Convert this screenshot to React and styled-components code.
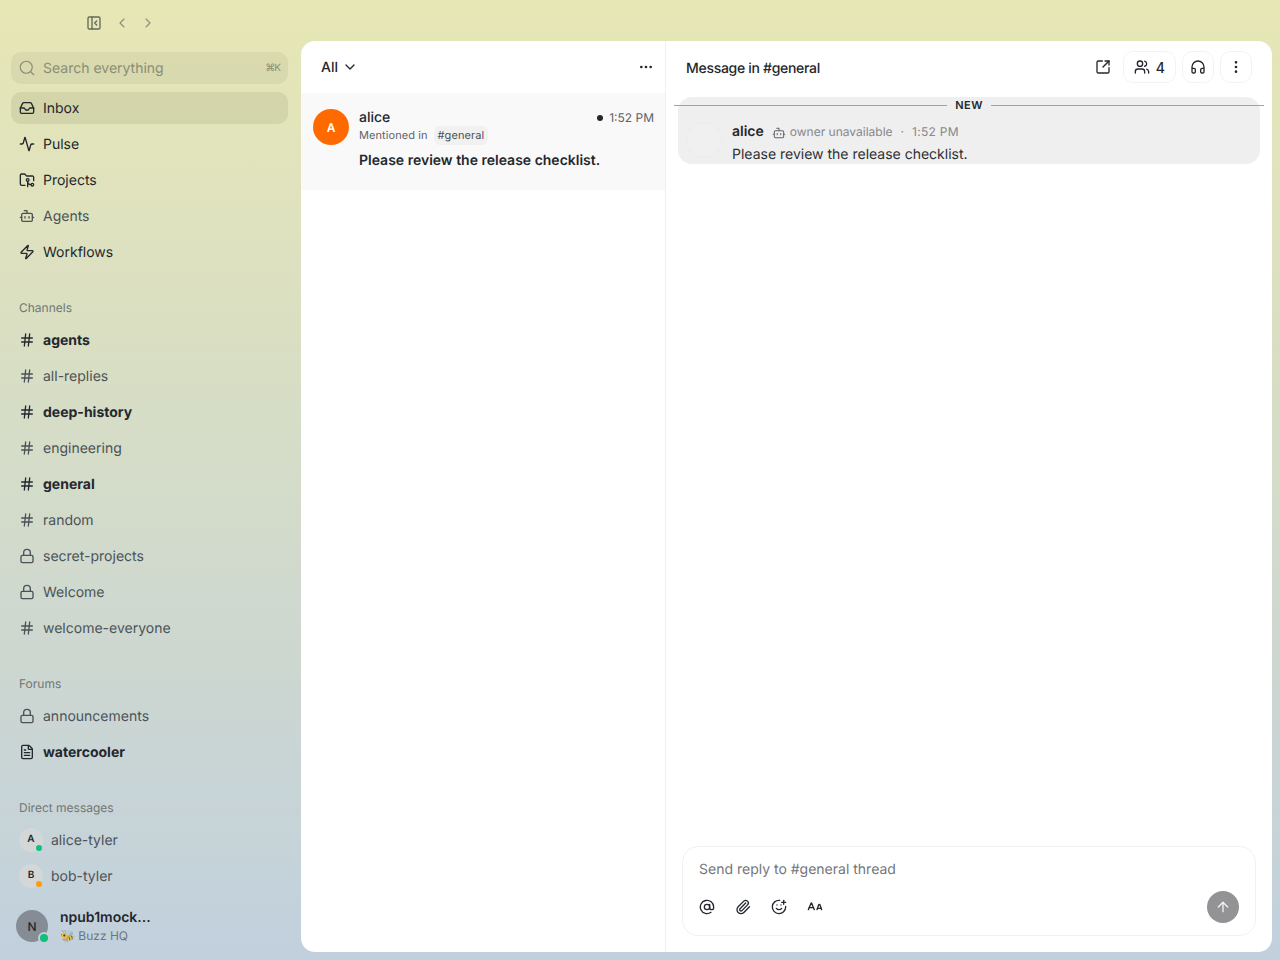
import {
  Activity, ALargeSmall, ArrowUp, AtSign, Bot, ChevronDown, ChevronLeft, ChevronRight,
  Ellipsis, EllipsisVertical, FileText, FolderGit2, Hash, Headphones, Inbox, Lock,
  Paperclip, PanelLeftClose, Search, SmilePlus, SquareArrowOutUpRight, Users, Zap,
} from 'lucide-react'
import styled, { createGlobalStyle } from 'styled-components'

const Global = createGlobalStyle`
  html, body { margin: 0; padding: 0; height: 100%; }
  body {
    font-family: Inter, "Noto Sans", sans-serif;
    color: #24272d;
    overflow: hidden;
    text-rendering: geometricPrecision;
  }
  * { box-sizing: border-box; }
`

const Page = styled.div`
  width: 1280px;
  height: 960px;
  display: flex;
  background: linear-gradient(180deg, #e7e7b5 0%, #c1d0dd 100%);
`

const Sidebar = styled.aside`
  width: 301px;
  flex: none;
  display: flex;
  flex-direction: column;
  padding: 0 13px 0 11px;
`

const TopBar = styled.div`
  height: 46px;
  flex: none;
  display: flex;
  align-items: center;
  gap: 10px;
  padding-left: 75px;
  color: #8d907b;
`

const SidebarToggle = styled(PanelLeftClose)`
  color: #66695a;
  margin-right: 2px;
`

const Label = styled.span`
  padding-top: 1px;
  line-height: 16px;
`

const SearchBox = styled.div`
  height: 32px;
  margin-top: 6px;
  flex: none;
  display: flex;
  align-items: center;
  gap: 7px;
  padding: 0 8px 0 7px;
  border-radius: 10px;
  background: rgba(120, 120, 90, 0.1);
  color: #8a8d76;
  font-size: 14px;
`

const Kbd = styled.span`
  margin-left: auto;
  font-size: 10px;
  letter-spacing: -1px;
`

const Nav = styled.nav`
  display: flex;
  flex-direction: column;
  gap: 4px;
  margin-top: 8px;
`

const Row = styled.div`
  height: 32px;
  display: flex;
  align-items: center;
  gap: 8px;
  padding-left: 8px;
  border-radius: 10px;
  font-size: 14px;
  font-weight: ${p => (p.$bold ? 700 : 400)};
  color: ${p => (p.$bold || p.$nav ? '#24272d' : '#4b5258')};
  background: ${p => (p.$active ? 'rgba(110, 110, 70, 0.13)' : 'transparent')};
  svg { flex: none; color: ${p => (p.$bold || p.$nav ? '#24272d' : '#4b5258')}; }
`

const SectionLabel = styled.div`
  height: 32px;
  margin-top: 20px;
  margin-bottom: -4px;
  padding-left: 8px;
  display: flex;
  align-items: center;
  font-size: 12px;
  line-height: 16px;
  color: #6f7674;
`

const DmAvatar = styled.span`
  position: relative;
  width: 24px;
  height: 24px;
  border-radius: 50%;
  background: #d4d7d8;
  display: flex;
  align-items: center;
  justify-content: center;
  font-size: 10px;
  font-weight: 600;
  color: #24272d;
  padding-bottom: 2px;
`

const StatusDot = styled.span`
  position: absolute;
  right: ${p => p.$offset}px;
  bottom: ${p => p.$offset}px;
  width: ${p => p.$size}px;
  height: ${p => p.$size}px;
  border-radius: 50%;
  background: ${p => p.$color};
  box-shadow: ${p => (p.$ring ? '0 0 0 2px #c3d0da' : 'none')};
`

const Footer = styled.div`
  display: flex;
  align-items: center;
  gap: 12px;
  margin-top: 16px;
  padding-left: 5px;
`

const UserAvatar = styled.span`
  position: relative;
  width: 32px;
  height: 32px;
  border-radius: 50%;
  background: #858c95;
  display: flex;
  align-items: center;
  justify-content: center;
  font-size: 12px;
  font-weight: 500;
  color: #24272d;
`

const UserText = styled.div`
  display: flex;
  flex-direction: column;
  gap: 1px;
`

const UserName = styled.span`
  padding-top: 1px;
  font-size: 14px;
  font-weight: 600;
  line-height: 18px;
`

const UserOrg = styled.span`
  font-size: 12px;
  line-height: 16px;
  color: #6d7580;
`

const Bee = styled.span`
  opacity: 0.7;
`

const Panel = styled.main`
  width: 971px;
  height: 911px;
  margin-top: 41px;
  display: flex;
  overflow: hidden;
  border-radius: 14px;
  background: #fff;
`

const ListColumn = styled.section`
  width: 365px;
  flex: none;
  border-right: 1px solid #f0f0f0;
`

const ListHeader = styled.header`
  height: 52px;
  display: flex;
  align-items: center;
  justify-content: space-between;
  padding: 0 11px 0 20px;
`

const Filter = styled.div`
  display: flex;
  align-items: center;
  gap: 4px;
  font-size: 14px;
  font-weight: 500;
`

const InboxItem = styled.article`
  height: 97px;
  display: flex;
  gap: 10px;
  padding: 16px 11px 0 12px;
  background: #f9f9f9;
`

const ItemAvatar = styled.span`
  width: 36px;
  height: 36px;
  flex: none;
  border-radius: 50%;
  background: #ff6a00;
  color: #fff;
  font-size: 12px;
  font-weight: 600;
  display: flex;
  align-items: center;
  justify-content: center;
`

const ItemBody = styled.div`
  flex: 1;
  min-width: 0;
`

const ItemTop = styled.div`
  display: flex;
  align-items: center;
  justify-content: space-between;
  height: 17px;
  padding-top: 1px;
  margin-bottom: -1px;
  line-height: 16px;
`

const ItemName = styled.span`
  font-size: 14px;
  font-weight: 500;
`

const ItemTime = styled.span`
  display: flex;
  align-items: center;
  gap: 6px;
  font-size: 12px;
  color: #5f6368;
`

const UnreadDot = styled.span`
  width: 6px;
  height: 6px;
  border-radius: 50%;
  background: #24272d;
`

const ItemMeta = styled.div`
  display: flex;
  align-items: center;
  gap: 6px;
  height: 20px;
  font-size: 11px;
  line-height: 14px;
  letter-spacing: 0.08px;
  color: #5f6368;
`

const ChannelPill = styled.span`
  padding: 2px 4px 3px;
  border-radius: 6px;
  background: #f1f1f1;
  color: #4b5258;
`

const ItemText = styled.p`
  margin: 6px 0 0;
  font-size: 14px;
  line-height: 20px;
  font-weight: 600;
`

const ThreadColumn = styled.section`
  flex: 1;
  min-width: 0;
  display: flex;
  flex-direction: column;
`

const ThreadHeader = styled.header`
  height: 52px;
  margin-bottom: 4px;
  flex: none;
  display: flex;
  align-items: center;
  padding: 0 20px;
  gap: 6px;
`

const ThreadTitle = styled.h1`
  margin: 4px auto 0 0;
  font-size: 14px;
  line-height: 16px;
  font-weight: 500;
  letter-spacing: -0.3px;
`

const IconButton = styled.button`
  height: 32px;
  min-width: 32px;
  padding: ${p => (p.$wide ? '0 10px' : '0')};
  margin-right: ${p => (p.$plain ? '-2px' : '0')};
  display: flex;
  align-items: center;
  justify-content: center;
  gap: 6px;
  border: 1px solid ${p => (p.$plain ? 'transparent' : '#f3f3f3')};
  border-radius: 10px;
  background: transparent;
  color: #24272d;
  font: 500 14px Inter, sans-serif;
`

const ThreadBody = styled.div`
  position: relative;
  flex: 1;
  padding: 0 12px;
`

const Highlight = styled.div`
  height: 67px;
  overflow: hidden;
  display: flex;
  gap: 10px;
  padding: 24px 8px 0 8px;
  border-radius: 14px;
  background: #efefef;
`

const Divider = styled.div`
  position: absolute;
  top: 0;
  left: 8px;
  right: 8px;
  display: flex;
  align-items: center;
  gap: 8px;
  height: 16px;
  font-size: 11px;
  font-weight: 600;
  letter-spacing: 0.5px;
  &::before, &::after {
    content: '';
    flex: 1;
    height: 1px;
    background: #a3a3a3;
  }
`

const GhostAvatar = styled.span`
  width: 36px;
  height: 36px;
  margin-top: 1px;
  flex: none;
  border-radius: 50%;
  border: 1px solid #ebebeb;
  background: #f0f0f0;
`

const MessageMeta = styled.div`
  height: 21px;
  padding-top: 1px;
  display: flex;
  align-items: center;
  font-size: 12px;
  line-height: 16px;
  color: #85888c;
`

const MessageAuthor = styled.span`
  font-size: 14px;
  font-weight: 600;
  color: #24272d;
  margin-right: 8px;
`

const OwnerNote = styled.span`
  display: flex;
  align-items: center;
  gap: 4px;
  svg { color: #5f6368; margin-top: 2px; }
`

const Separator = styled.span`
  margin: 0 8px;
`

const MessageTime = styled.span`
  letter-spacing: 0.3px;
`

const MessageText = styled.p`
  margin: 3px 0 0;
  font-size: 14px;
  line-height: 20px;
  color: #2c2f35;
`

const Composer = styled.div`
  height: 90px;
  flex: none;
  margin: 0 16px 16px;
  padding: 14px 16px 0;
  border: 1px solid #f1f1f1;
  border-radius: 16px;
`

const Placeholder = styled.div`
  font-size: 14px;
  line-height: 18px;
  color: #73767a;
`

const Tools = styled.div`
  display: flex;
  align-items: center;
  gap: 20px;
  margin-top: 12px;
  color: #24272d;
`

const SendButton = styled.span`
  width: 32px;
  height: 32px;
  margin-left: auto;
  border-radius: 50%;
  background: #939396;
  color: #f2f2f2;
  display: flex;
  align-items: center;
  justify-content: center;
`

const primary = [
  { label: 'Inbox', Icon: Inbox, active: true },
  { label: 'Pulse', Icon: Activity },
  { label: 'Projects', Icon: FolderGit2 },
  { label: 'Agents', Icon: Bot, muted: true },
  { label: 'Workflows', Icon: Zap },
]

const channels = [
  { label: 'agents', Icon: Hash, bold: true },
  { label: 'all-replies', Icon: Hash },
  { label: 'deep-history', Icon: Hash, bold: true },
  { label: 'engineering', Icon: Hash },
  { label: 'general', Icon: Hash, bold: true },
  { label: 'random', Icon: Hash },
  { label: 'secret-projects', Icon: Lock },
  { label: 'Welcome', Icon: Lock },
  { label: 'welcome-everyone', Icon: Hash },
]

const forums = [
  { label: 'announcements', Icon: Lock },
  { label: 'watercooler', Icon: FileText, bold: true },
]

const dms = [
  { label: 'alice-tyler', letter: 'A', color: '#0fbf7c' },
  { label: 'bob-tyler', letter: 'B', color: '#ff9d0a' },
]

const SideRow = ({ item }) => (
  <Row $bold={item.bold} $active={item.active} $nav={item.nav}>
    <item.Icon size={16} strokeWidth={2} />
    <Label>{item.label}</Label>
  </Row>
)

export default function App() {
  return (
    <Page>
      <Global />
      <Sidebar>
        <TopBar>
          <SidebarToggle size={16} strokeWidth={2} />
          <ChevronLeft size={16} strokeWidth={1.75} />
          <ChevronRight size={16} strokeWidth={1.75} />
        </TopBar>
        <SearchBox>
          <Search size={18} strokeWidth={1.5} />
          <Label>Search everything</Label>
          <Kbd>⌘K</Kbd>
        </SearchBox>
        <Nav>
          {primary.map(item => (
            <SideRow key={item.label} item={{ ...item, nav: !item.muted }} />
          ))}
          <SectionLabel>Channels</SectionLabel>
          {channels.map(item => <SideRow key={item.label} item={item} />)}
          <SectionLabel>Forums</SectionLabel>
          {forums.map(item => <SideRow key={item.label} item={item} />)}
          <SectionLabel>Direct messages</SectionLabel>
          {dms.map(dm => (
            <Row key={dm.label}>
              <DmAvatar>
                {dm.letter}
                <StatusDot $color={dm.color} $offset={1} $size={6} />
              </DmAvatar>
              <Label>{dm.label}</Label>
            </Row>
          ))}
        </Nav>
        <Footer>
          <UserAvatar>
            N
            <StatusDot $color="#0fbf7c" $offset={0} $size={8} $ring />
          </UserAvatar>
          <UserText>
            <UserName>npub1mock...</UserName>
            <UserOrg><Bee>🐝</Bee> Buzz HQ</UserOrg>
          </UserText>
        </Footer>
      </Sidebar>
      <Panel>
        <ListColumn>
          <ListHeader>
            <Filter>
              <Label>All</Label>
              <ChevronDown size={16} strokeWidth={2} />
            </Filter>
            <Ellipsis size={16} strokeWidth={2} />
          </ListHeader>
          <InboxItem>
            <ItemAvatar>A</ItemAvatar>
            <ItemBody>
              <ItemTop>
                <ItemName>alice</ItemName>
                <ItemTime>
                  <UnreadDot />
                  1:52 PM
                </ItemTime>
              </ItemTop>
              <ItemMeta>
                Mentioned in
                <ChannelPill>#general</ChannelPill>
              </ItemMeta>
              <ItemText>Please review the release checklist.</ItemText>
            </ItemBody>
          </InboxItem>
        </ListColumn>
        <ThreadColumn>
          <ThreadHeader>
            <ThreadTitle>Message in #general</ThreadTitle>
            <IconButton $plain>
              <SquareArrowOutUpRight size={16} strokeWidth={2} />
            </IconButton>
            <IconButton $wide>
              <Users size={16} strokeWidth={2} />
              4
            </IconButton>
            <IconButton>
              <Headphones size={16} strokeWidth={2} />
            </IconButton>
            <IconButton>
              <EllipsisVertical size={16} strokeWidth={2} />
            </IconButton>
          </ThreadHeader>
          <ThreadBody>
            <Highlight>
              <GhostAvatar />
              <div>
                <MessageMeta>
                  <MessageAuthor>alice</MessageAuthor>
                  <OwnerNote>
                    <Bot size={14} strokeWidth={1.75} />
                    owner unavailable
                  </OwnerNote>
                  <Separator>·</Separator>
                  <MessageTime>1:52 PM</MessageTime>
                </MessageMeta>
                <MessageText>Please review the release checklist.</MessageText>
              </div>
            </Highlight>
            <Divider>NEW</Divider>
          </ThreadBody>
          <Composer>
            <Placeholder>Send reply to #general thread</Placeholder>
            <Tools>
              <AtSign size={16} strokeWidth={2} />
              <Paperclip size={16} strokeWidth={2} />
              <SmilePlus size={16} strokeWidth={2} />
              <ALargeSmall size={16} strokeWidth={2} />
              <SendButton>
                <ArrowUp size={16} strokeWidth={2} />
              </SendButton>
            </Tools>
          </Composer>
        </ThreadColumn>
      </Panel>
    </Page>
  )
}
